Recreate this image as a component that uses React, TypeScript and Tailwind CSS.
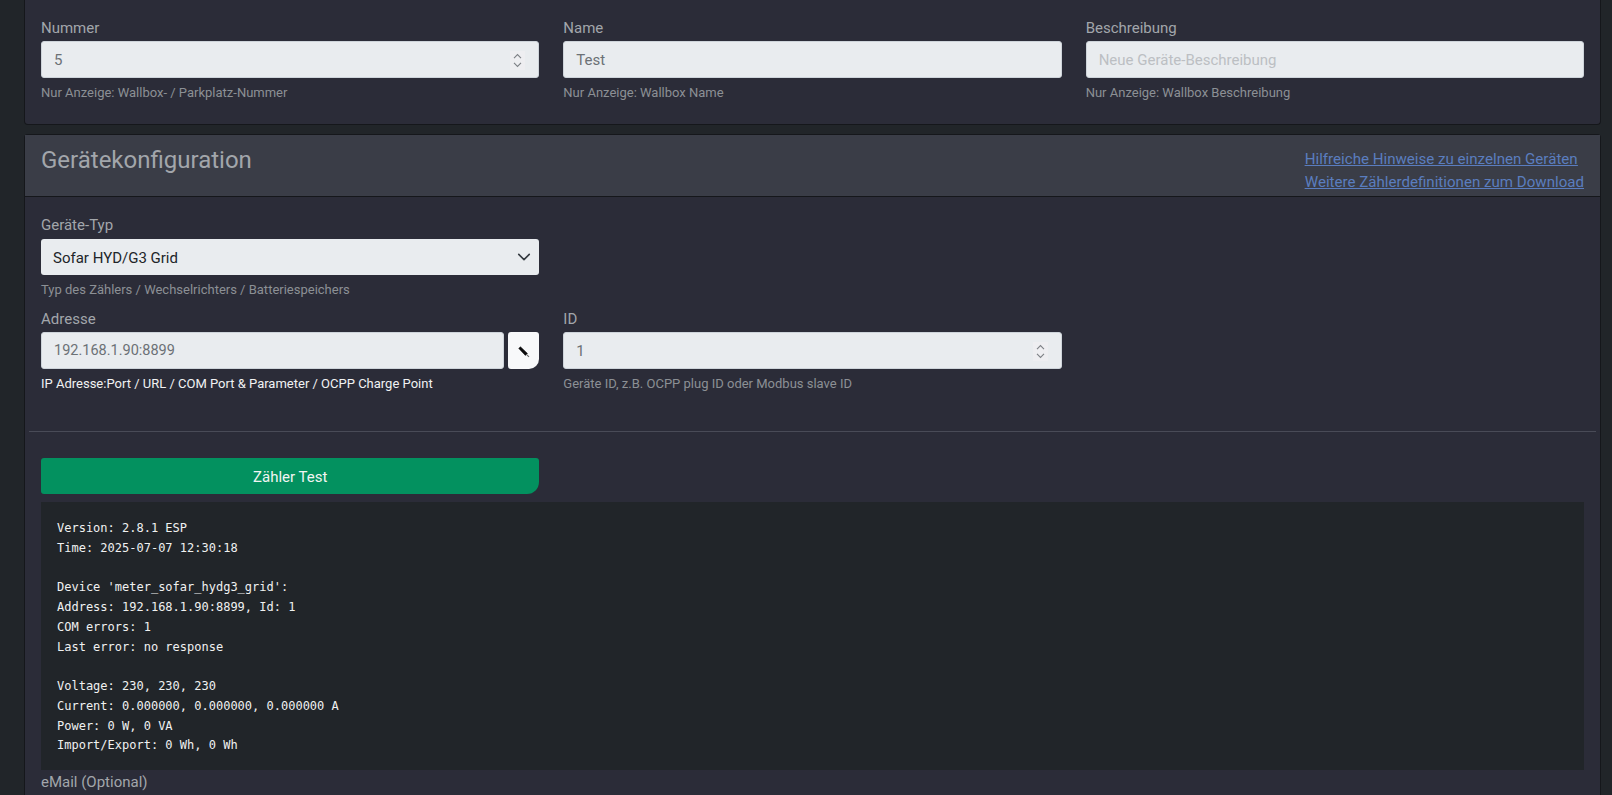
import * as React from 'react';

const logLines = [
    'Version: 2.8.1 ESP',
    'Time: 2025-07-07 12:30:18',
    '',
    "Device 'meter_sofar_hydg3_grid':",
    'Address: 192.168.1.90:8899, Id: 1',
    'COM errors: 1',
    'Last error: no response',
    '',
    'Voltage: 230, 230, 230',
    'Current: 0.000000, 0.000000, 0.000000 A',
    'Power: 0 W, 0 VA',
    'Import/Export: 0 Wh, 0 Wh',
];

const Spinner = () => (
    <span className="flex h-[19px] w-[15px] items-center justify-center bg-[#eeeef1]">
        <svg width="9" height="15" viewBox="0 0 9 15" fill="none" stroke="#7d8085" strokeWidth="1.1">
            <path d="M1 5.2 4.5 1.6 8 5.2" />
            <path d="M1 9.8 4.5 13.4 8 9.8" />
        </svg>
    </span>
);

interface IFieldProps {
    label: string;
    help: string;
    helpClassName?: string;
    children: React.ReactNode;
}

const Field = ({ label, help, helpClassName, children }: IFieldProps) => (
    <div className="min-w-0">
        <label className="block h-[25px] text-[15px] leading-[24px] text-[#a2a6ab]">{label}</label>
        {children}
        <p className={`mt-[5px] h-[20px] text-[13px] leading-[20px] ${helpClassName ?? 'text-[#8c9095]'}`}>{help}</p>
    </div>
);

const inputClass =
    'flex h-[37px] items-center justify-between rounded-[3px] border border-[#ced4da] bg-[#e9ecef] pl-[12px] pr-[13px] pt-[1px] text-[15px] text-[#6c7176]';

export default function App() {
    return (
        <div
            className="h-[795px] w-[1612px] overflow-hidden bg-[#212529] pl-[24px] pr-[11px]"
            style={{ fontFamily: 'Roboto, "Noto Sans", sans-serif' }}
        >
            <section className="h-[125px] rounded-b-[4px] border-x border-b border-[#15171b] bg-[#2b2c38] px-[16px] pt-[16px]">
                <div className="grid grid-cols-3 gap-x-[24px]">
                    <Field label="Nummer" help="Nur Anzeige: Wallbox- / Parkplatz-Nummer">
                        <div className={inputClass}>
                            <span>5</span>
                            <Spinner />
                        </div>
                    </Field>
                    <Field label="Name" help="Nur Anzeige: Wallbox Name">
                        <div className={inputClass}>Test</div>
                    </Field>
                    <Field label="Beschreibung" help="Nur Anzeige: Wallbox Beschreibung">
                        <div className={`${inputClass} !text-[#bcbfc3]`}>Neue Geräte-Beschreibung</div>
                    </Field>
                </div>
            </section>

            <section className="mt-[9px] h-[700px] rounded-t-[4px] border-x border-t border-[#15171b] bg-[#2b2c38]">
                <header className="flex h-[62px] items-start justify-between border-b border-[#15171b] bg-[#3a3d47] px-[16px] pt-[11px]">
                    <h2 className="text-[24px] leading-[28px] font-normal text-[#a2a6ab]">Gerätekonfiguration</h2>
                    <div className="flex flex-col items-start pt-[2px] text-[15.1px] leading-[23px] text-[#5a7dbf] underline">
                        <a href="#">Hilfreiche Hinweise zu einzelnen Geräten</a>
                        <a href="#">Weitere Zählerdefinitionen zum Download</a>
                    </div>
                </header>

                <div className="pt-[16px]">
                    <div className="grid grid-cols-3 gap-x-[24px] px-[16px]">
                        <Field label="Geräte-Typ" help="Typ des Zählers / Wechselrichters / Batteriespeichers">
                            <div className="mt-[1px] flex h-[36px] items-center justify-between rounded-[3px] bg-[#e9ecef] pl-[12px] pr-[8px] pt-[2px] text-[15px] text-[#212529]">
                                <span>Sofar HYD/G3 Grid</span>
                                <svg className="-mt-[2px]" width="14" height="14" viewBox="0 0 16 16" fill="none" stroke="#343a40" strokeWidth="1.8" strokeLinecap="round" strokeLinejoin="round">
                                    <path d="m2 5 6 6 6-6" />
                                </svg>
                            </div>
                        </Field>
                    </div>

                    <div className="mt-[7px] grid grid-cols-3 gap-x-[24px] px-[16px]">
                        <Field
                            label="Adresse"
                            help="IP Adresse:Port / URL / COM Port & Parameter / OCPP Charge Point"
                            helpClassName="text-[#f1f2f3]"
                        >
                            <div className="flex gap-[4px]">
                                <div className={`${inputClass} flex-1 !text-[14.5px]`}>192.168.1.90:8899</div>
                                <button className="flex h-[37px] w-[31px] items-center justify-center rounded-[3px] rounded-br-[10px] bg-[#f8f9fa] pl-[1px] pt-[2px]">
                                    <svg className="block shrink-0" width="12" height="12" viewBox="0 0 12 12">
                                        <path d="M0.8 2.4 2.4 0.8 9.4 7.4 7.4 9.4Z" fill="#0c0c0c" stroke="#0c0c0c" strokeWidth="0.6" strokeLinejoin="round" />
                                        <path d="M8.4 8.4 11 10.8" fill="none" stroke="#666" strokeWidth="1.1" />
                                    </svg>
                                </button>
                            </div>
                        </Field>
                        <Field label="ID" help="Geräte ID, z.B. OCPP plug ID oder Modbus slave ID">
                            <div className={inputClass}>
                                <span>1</span>
                                <Spinner />
                            </div>
                        </Field>
                    </div>

                    <hr className="mx-[4px] mt-[37px] border-t border-[#494b57]" />

                    <div className="px-[16px] pt-[26px]">
                        <div className="grid grid-cols-3 gap-x-[24px]">
                            <button className="h-[36px] rounded-[3px] rounded-br-[12px] bg-[#03915f] pt-[2px] text-[15px] text-[#f2f5f3]">
                                Zähler Test
                            </button>
                        </div>
                        <pre
                            className="mt-[8px] h-[268px] bg-[#212529] px-[16px] pt-[17px] text-[12px] leading-[19.75px] text-[#f0f1f1]"
                            style={{ fontFamily: '"DejaVu Sans Mono", monospace' }}
                        >
                            {logLines.join('\n')}
                        </pre>
                        <label className="block h-[25px] text-[15px] leading-[24px] text-[#a2a6ab]">eMail (Optional)</label>
                    </div>
                </div>
            </section>
        </div>
    );
}
